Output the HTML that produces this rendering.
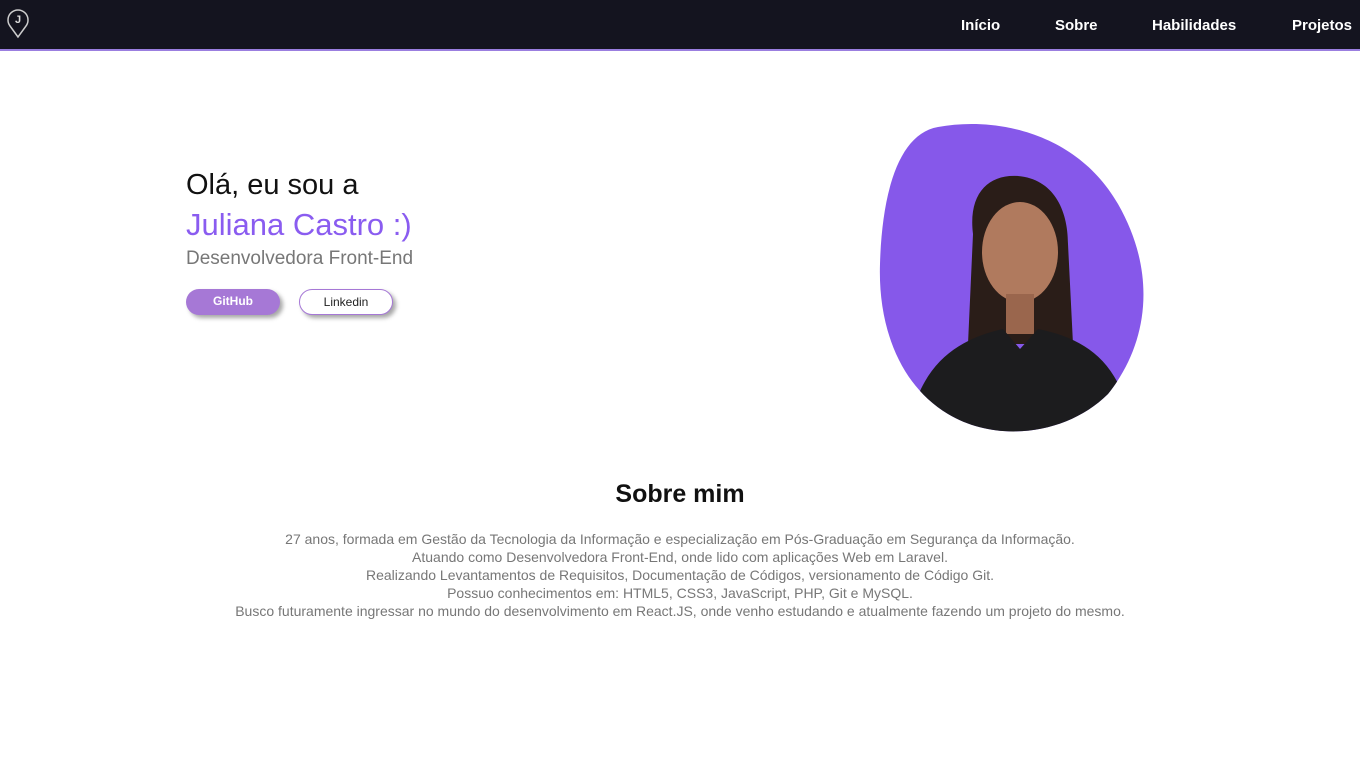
<!DOCTYPE html>
<html><head><meta charset="utf-8"><style>
*{margin:0;padding:0;box-sizing:border-box}
body{width:1360px;height:768px;background:#fff;font-family:"Liberation Sans",sans-serif;position:relative;overflow:hidden}
nav{position:absolute;left:0;top:0;width:1360px;height:51px;background:#14141f;border-bottom:2px solid #9b7fe0}
nav a{position:absolute;top:17px;color:#fff;font-weight:bold;font-size:15px;text-decoration:none}
.t{position:absolute;white-space:nowrap}
.btn{position:absolute;top:289px;height:26px;border-radius:13px;font-size:12px;text-align:center;line-height:24px;box-shadow:3px 3px 4px rgba(0,0,0,.35)}
.ab{position:absolute;left:0;width:1360px;text-align:center;color:#777;font-size:14px;line-height:18px}
</style></head><body>
<nav>
<svg style="position:absolute;left:6px;top:7px" width="24" height="32" viewBox="0 0 24 32"><path d="M12 30 L4 19 A10 10 0 1 1 20 19 Z" fill="none" stroke="#ccc" stroke-width="1.5"/><text x="12" y="16" text-anchor="middle" fill="#ddd" font-size="11" font-family="Liberation Sans" font-weight="bold">J</text></svg>
<a style="left:961px">Início</a><a style="left:1055px">Sobre</a><a style="left:1152px">Habilidades</a><a style="left:1292px">Projetos</a>
</nav>
<div class="t" style="left:186px;top:169px;font-size:29px;color:#111">Olá, eu sou a</div>
<div class="t" style="left:186px;top:207px;font-size:31px;color:#8a5cf0">Juliana Castro :)</div>
<div class="t" style="left:186px;top:248px;font-size:19px;color:#777">Desenvolvedora Front-End</div>
<div class="btn" style="left:186px;width:94px;background:#a678d6;color:#fff;font-weight:bold">GitHub</div>
<div class="btn" style="left:299px;width:94px;background:#fff;border:1.5px solid #a678d6;color:#222">Linkedin</div>
<svg style="position:absolute;left:878px;top:124px" width="272" height="308" viewBox="0 0 272 308">
<defs><clipPath id="c"><path d="M60 3 C120 -8 200 10 240 80 C280 150 270 220 230 270 C190 310 120 320 70 290 C20 260 0 200 2 140 C4 70 20 10 60 3 Z"/></clipPath></defs>
<path d="M60 3 C120 -8 200 10 240 80 C280 150 270 220 230 270 C190 310 120 320 70 290 C20 260 0 200 2 140 C4 70 20 10 60 3 Z" fill="#8658ea"/>
<g clip-path="url(#c)">
<path d="M95 110 C90 70 110 50 140 52 C175 55 190 85 190 120 L195 220 L90 220 Z" fill="#2a1d18"/>
<ellipse cx="142" cy="128" rx="38" ry="50" fill="#b07a5e"/>
<rect x="128" y="170" width="28" height="40" fill="#9a664d"/>
<path d="M30 310 C40 240 80 215 125 205 L142 225 L160 205 C210 215 245 240 255 310 Z" fill="#1c1c1e"/>
</g></svg>
<div class="t" style="left:0;width:1360px;text-align:center;top:480px;font-size:25px;font-weight:bold;color:#111">Sobre mim</div>
<div class="ab" style="top:530px">27 anos, formada em Gestão da Tecnologia da Informação e especialização em Pós-Graduação em Segurança da Informação.<br>Atuando como Desenvolvedora Front-End, onde lido com aplicações Web em Laravel.<br>Realizando Levantamentos de Requisitos, Documentação de Códigos, versionamento de Código Git.<br>Possuo conhecimentos em: HTML5, CSS3, JavaScript, PHP, Git e MySQL.<br>Busco futuramente ingressar no mundo do desenvolvimento em React.JS, onde venho estudando e atualmente fazendo um projeto do mesmo.</div>
</body></html>
